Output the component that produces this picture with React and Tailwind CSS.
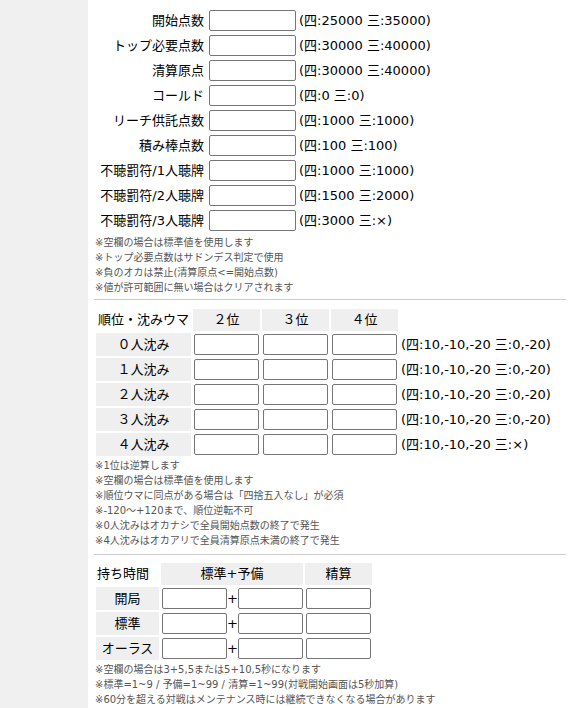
import React from "react";

const FONT = { fontFamily: '"DejaVu Sans", "Noto Sans CJK JP", sans-serif' };

const rows1 = [
  ["開始点数", "(四:25000 三:35000)"],
  ["トップ必要点数", "(四:30000 三:40000)"],
  ["清算原点", "(四:30000 三:40000)"],
  ["コールド", "(四:0 三:0)"],
  ["リーチ供託点数", "(四:1000 三:1000)"],
  ["積み棒点数", "(四:100 三:100)"],
  ["不聴罰符/1人聴牌", "(四:1000 三:1000)"],
  ["不聴罰符/2人聴牌", "(四:1500 三:2000)"],
  ["不聴罰符/3人聴牌", "(四:3000 三:×)"],
];

const notes1 = [
  "※空欄の場合は標準値を使用します",
  "※トップ必要点数はサドンデス判定で使用",
  "※負のオカは禁止(清算原点<=開始点数)",
  "※値が許可範囲に無い場合はクリアされます",
];

const rows2 = [
  ["０人沈み", "(四:10,-10,-20 三:0,-20)"],
  ["１人沈み", "(四:10,-10,-20 三:0,-20)"],
  ["２人沈み", "(四:10,-10,-20 三:0,-20)"],
  ["３人沈み", "(四:10,-10,-20 三:0,-20)"],
  ["４人沈み", "(四:10,-10,-20 三:×)"],
];

const notes2 = [
  "※1位は逆算します",
  "※空欄の場合は標準値を使用します",
  "※順位ウマに同点がある場合は「四捨五入なし」が必須",
  "※-120～+120まで、順位逆転不可",
  "※0人沈みはオカナシで全員開始点数の終了で発生",
  "※4人沈みはオカアリで全員清算原点未満の終了で発生",
];

const rows3 = ["開局", "標準", "オーラス"];

const notes3 = [
  "※空欄の場合は3+5,5または5+10,5秒になります",
  "※標準=1~9 / 予備=1~99 / 清算=1~99(対戦開始画面は5秒加算)",
  "※60分を超える対戦はメンテナンス時には継続できなくなる場合があります",
];

function Input({ w = "w-[65px]" }) {
  return (
    <input
      type="text"
      className={`${w} h-[21px] border border-[#767676] rounded-[2px] bg-white outline-none`}
    />
  );
}

function Notes({ items }) {
  return (
    <div className="mt-[2px] text-[10px] leading-[15px] text-[#555555] pl-[1px] whitespace-nowrap">
      {items.map((t) => (
        <div key={t}>{t}</div>
      ))}
    </div>
  );
}

export default function App() {
  return (
    <div className="flex min-h-screen h-[708px] overflow-hidden bg-white text-black" style={FONT}>
      <div className="w-[88px] shrink-0 bg-[#f0f0f0]" />
      <div className="flex-1 pl-[6px] pr-[2px] text-[13px]">
        {/* Section 1 */}
        <div className="pt-[8px]">
          {rows1.map(([label, hint]) => (
            <div key={label} className="flex items-center h-[25px]">
              <div className="w-[110px] text-right whitespace-nowrap leading-[16px]">{label}</div>
              <div className="ml-[5px]">
                <Input w="w-[87px]" />
              </div>
              <div className="ml-[3px] whitespace-nowrap leading-[16px]">{hint}</div>
            </div>
          ))}
        </div>
        <Notes items={notes1} />
        <div className="mt-[4px] border-t border-[#cccccc]" />

        {/* Section 2 */}
        <div className="mt-[9px] ml-[2px] grid grid-cols-[95px_67px_67px_67px_auto] gap-[2px]">
          <div className="h-[22px] flex items-center justify-center whitespace-nowrap leading-[16px]">
            順位・沈みウマ
          </div>
          {["２位", "３位", "４位"].map((h) => (
            <div key={h} className="h-[22px] bg-[#efefef] flex items-center justify-center leading-[16px]">
              {h}
            </div>
          ))}
          <div />
          {rows2.map(([label, hint]) => (
            <React.Fragment key={label}>
              <div className="h-[23px] bg-[#efefef] flex items-center justify-center leading-[16px]">
                {label}
              </div>
              <div className="h-[23px] flex items-center justify-center">
                <Input />
              </div>
              <div className="h-[23px] flex items-center justify-center">
                <Input />
              </div>
              <div className="h-[23px] flex items-center justify-center">
                <Input />
              </div>
              <div className="h-[23px] flex items-center pl-[1px] whitespace-nowrap leading-[16px]">
                {hint}
              </div>
            </React.Fragment>
          ))}
        </div>
        <Notes items={notes2} />
        <div className="mt-[6px] border-t border-[#cccccc]" />

        {/* Section 3 */}
        <div className="mt-[8px] ml-[2px] grid grid-cols-[63px_142px_67px] gap-[2px]">
          <div className="h-[22px] flex items-center pl-[1px] whitespace-nowrap leading-[16px]">持ち時間</div>
          <div className="h-[22px] bg-[#efefef] flex items-center justify-center leading-[16px]">標準+予備</div>
          <div className="h-[22px] bg-[#efefef] flex items-center justify-center leading-[16px]">精算</div>
          {rows3.map((label) => (
            <React.Fragment key={label}>
              <div className="h-[23px] bg-[#efefef] flex items-center justify-center whitespace-nowrap leading-[16px]">
                {label}
              </div>
              <div className="h-[23px] flex items-center pl-[1px]">
                <Input />
                <span className="w-[11px] text-center leading-[16px]">+</span>
                <Input />
              </div>
              <div className="h-[23px] flex items-center justify-center">
                <Input />
              </div>
            </React.Fragment>
          ))}
        </div>
        <Notes items={notes3} />
      </div>
    </div>
  );
}
